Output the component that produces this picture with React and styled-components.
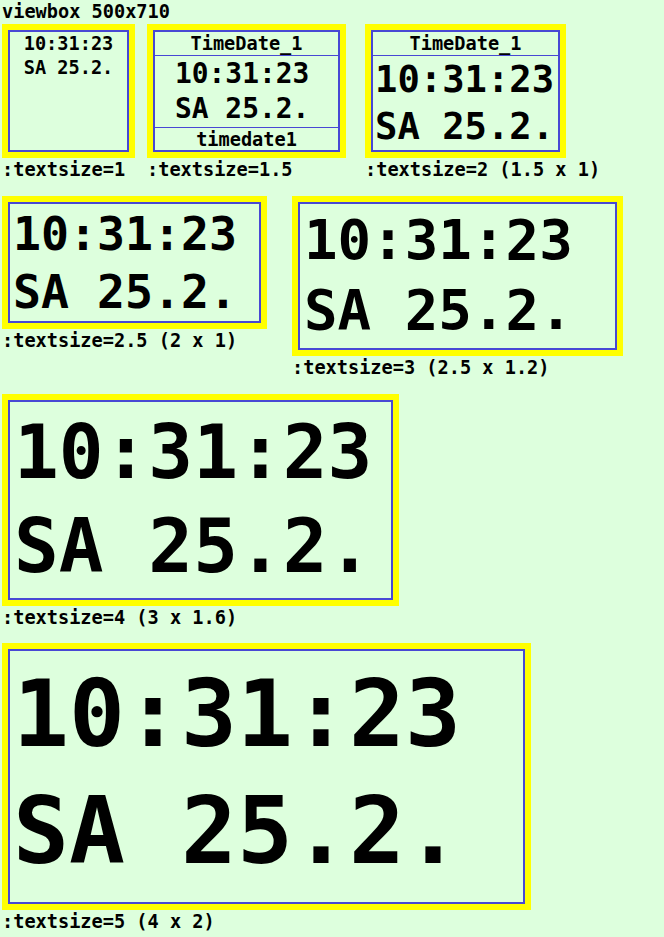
import React from 'react';
import styled, { createGlobalStyle } from 'styled-components';

const BASE = 18.6;
const LINE = 23.5;

const GlobalStyle = createGlobalStyle`
  html, body {
    margin: 0;
    background: #ddffdd;
  }
  body {
    color: #000;
    font-family: "DejaVu Sans Mono", "Liberation Mono", monospace;
    font-weight: bold;
  }
`;

const Page = styled.div`
  padding: 0 2px;
`;

const Title = styled.div`
  font-size: ${BASE}px;
  height: 24px;
  line-height: ${LINE}px;
  white-space: nowrap;
`;

const Row = styled.div`
  align-items: flex-start;
  display: flex;
  margin-top: ${({ $top }) => $top}px;
`;

const Cell = styled.div`
  flex: none;
  margin-left: ${({ $offset }) => $offset || 0}px;
  width: ${({ $w }) => $w}px;
`;

const Frame = styled.div`
  border: 6px solid #ffff00;
  box-sizing: border-box;
  height: ${({ $h }) => $h}px;
  width: 100%;
`;

const Screen = styled.div`
  border: 2px solid #4848d4;
  box-sizing: border-box;
  display: flex;
  flex-direction: column;
  height: 100%;
  overflow: hidden;
`;

const Label = styled.div`
  border-bottom: ${({ $footer }) => ($footer ? 'none' : '1px solid #4848d4')};
  border-top: ${({ $footer }) => ($footer ? '1px solid #4848d4' : 'none')};
  flex: none;
  font-size: ${BASE}px;
  height: 23px;
  line-height: 23px;
  text-align: center;
  white-space: nowrap;
`;

const Readout = styled.div`
  flex: none;
  font-size: ${({ $size }) => $size * BASE}px;
  line-height: ${({ $size }) => $size * LINE}px;
  padding-left: ${({ $left }) => $left || 0}px;
  padding-top: ${({ $top }) => $top || 0}px;
  text-align: ${({ $center }) => ($center ? 'center' : 'left')};
  white-space: pre;
`;

const Caption = styled.div`
  font-size: ${BASE}px;
  line-height: ${LINE}px;
  white-space: nowrap;
`;

const TimeBox = ({ w, h, offset, size, caption, header, footer, center, left, top }) => (
  <Cell $offset={offset} $w={w}>
    <Frame $h={h}>
      <Screen>
        {header && <Label>{header}</Label>}
        <Readout $center={center} $left={left} $size={size} $top={top}>
          {'10:31:23\nSA 25.2.'}
        </Readout>
        {footer && <Label $footer>{footer}</Label>}
      </Screen>
    </Frame>
    <Caption>{caption}</Caption>
  </Cell>
);

const App = () => (
  <Page>
    <GlobalStyle />
    <Title>viewbox 500x710</Title>
    <Row $top={0}>
      <TimeBox caption=":textsize=1" center h={134} size={1} w={133} />
      <TimeBox
        caption=":textsize=1.5"
        footer="timedate1"
        h={134}
        header="TimeDate_1"
        left={20}
        offset={12}
        size={1.5}
        w={199}
      />
      <TimeBox
        caption=":textsize=2 (1.5 x 1)"
        h={134}
        header="TimeDate_1"
        left={2}
        offset={19}
        size={2}
        w={201}
      />
    </Row>
    <Row $top={14}>
      <TimeBox caption=":textsize=2.5 (2 x 1)" h={133} left={3} size={2.5} top={1} w={265} />
      <TimeBox
        caption=":textsize=3 (2.5 x 1.2)"
        h={160}
        left={4}
        offset={25}
        size={3}
        top={1}
        w={331}
      />
    </Row>
    <Row $top={15}>
      <TimeBox caption=":textsize=4 (3 x 1.6)" h={212} left={4} size={4} top={4} w={397} />
    </Row>
    <Row $top={13}>
      <TimeBox caption=":textsize=5 (4 x 2)" h={267} left={3} size={5} top={5} w={529} />
    </Row>
  </Page>
);

export default App;
